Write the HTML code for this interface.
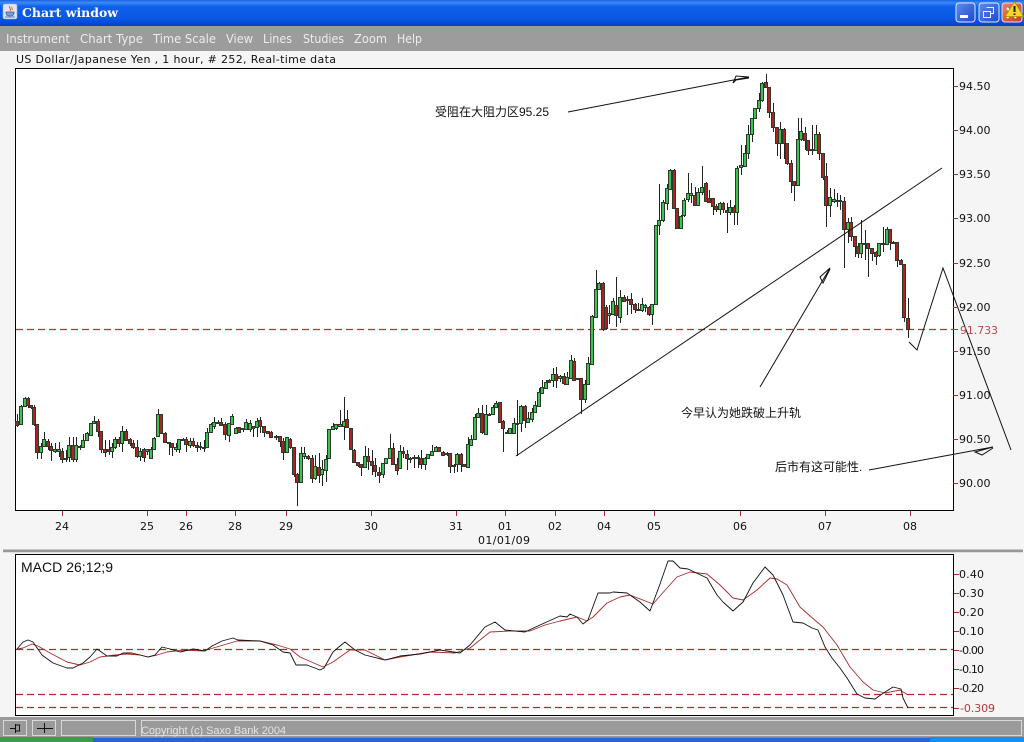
<!DOCTYPE html>
<html><head><meta charset="utf-8"><title>Chart window</title>
<style>html,body{margin:0;padding:0;background:#f5f5f5;overflow:hidden}svg{display:block}
text{font-family:"DejaVu Sans","Liberation Sans","Noto Sans CJK SC",sans-serif;font-size:11px}
.c{font-family:"Liberation Sans","Noto Sans CJK SC",sans-serif;font-size:12px;fill:#111}
.m{fill:#ececec;font-size:12px}.a{fill:#111}</style></head><body>
<svg width="1024" height="742" viewBox="0 0 1024 742" xmlns="http://www.w3.org/2000/svg">
<defs><linearGradient id="tb" x1="0" y1="0" x2="0" y2="1"><stop offset="0" stop-color="#1c60e0"/><stop offset=".1" stop-color="#3a8cf6"/><stop offset=".25" stop-color="#0f60ea"/><stop offset=".7" stop-color="#0a58e6"/><stop offset="1" stop-color="#0440c4"/></linearGradient>
<linearGradient id="bb" x1="0" y1="0" x2="1" y2="1"><stop offset="0" stop-color="#5f8cf0"/><stop offset="1" stop-color="#1c48c8"/></linearGradient>
<linearGradient id="br" x1="0" y1="0" x2="1" y2="1"><stop offset="0" stop-color="#e8866a"/><stop offset="1" stop-color="#c83a18"/></linearGradient></defs>
<rect width="1024" height="742" fill="#f5f5f5"/>
<rect width="1024" height="26" fill="url(#tb)"/>
<rect x="3" y="4" width="14" height="15" rx="2" fill="#dfe6f2" stroke="#9fb4dc" stroke-width=".6"/>
<path d="M10 6c-2 2 2 3 0 5M12 7c-1 1 1 2 0 3" stroke="#d8641c" fill="none"/>
<path d="M6 12h8c0 3-1 4-4 4s-4-1-4-4zM5 17h10" stroke="#3a5fa8" fill="#7f9cd0" stroke-width=".8"/>
<text x="22" y="17" font-weight="bold" textLength="96" lengthAdjust="spacingAndGlyphs" style="font-family:'DejaVu Serif','Liberation Serif',serif;font-size:12px" fill="#fff">Chart window</text>
<rect x="956" y="3" width="19" height="19" rx="3" fill="url(#bb)" stroke="#dfe8fb"/><rect x="960" y="15" width="8" height="3" fill="#fff"/>
<rect x="979" y="3" width="20" height="19" rx="3" fill="url(#bb)" stroke="#dfe8fb"/><path d="M986.500 7.500h7v6h-2.500M983.500 11.500h7v6h-7z" fill="none" stroke="#e8eefc"/>
<rect x="1002" y="3" width="20" height="19" rx="3" fill="url(#br)" stroke="#f0dcd4"/><path d="M1007 8l9 10M1016 8l-9 10" stroke="#fff" stroke-width="2"/>
<path d="M1014.500 1.500L1023.500 16.500H1005z" fill="#f8d428" stroke="#a88810" stroke-width=".8"/><path d="M1014.500 6v6M1014.500 13.500v1.500" stroke="#222" stroke-width="2"/>
<rect y="26" width="1024" height="25" fill="#9c9c9c"/>
<text class="m" x="6" y="43" textLength="64" lengthAdjust="spacingAndGlyphs">Instrument</text><text class="m" x="80" y="43" textLength="63" lengthAdjust="spacingAndGlyphs">Chart Type</text><text class="m" x="153" y="43" textLength="63" lengthAdjust="spacingAndGlyphs">Time Scale</text><text class="m" x="226" y="43" textLength="27" lengthAdjust="spacingAndGlyphs">View</text><text class="m" x="263" y="43" textLength="29" lengthAdjust="spacingAndGlyphs">Lines</text><text class="m" x="303" y="43" textLength="41" lengthAdjust="spacingAndGlyphs">Studies</text><text class="m" x="354" y="43" textLength="33" lengthAdjust="spacingAndGlyphs">Zoom</text><text class="m" x="397" y="43" textLength="25" lengthAdjust="spacingAndGlyphs">Help</text>
<text class="a" x="16" y="63" textLength="320">US Dollar/Japanese Yen , 1 hour, # 252, Real-time data</text>
<rect x="15.500" y="68.500" width="938" height="442" fill="#fff" stroke="#000"/>
<rect x="15.500" y="554.500" width="938" height="161" fill="#fff" stroke="#000"/>
<path d="M16 329.500H953" stroke="#b8302f" stroke-width="1.300" stroke-dasharray="7 4" fill="none"/>
<path d="M953 329.500H958" stroke="#b03838"/>
<g transform="translate(.5 0)"><path fill="none" stroke="#222" d="M17 414V427M21 405V424M25 397V406M28 397V408M31 405V409M34 405V426M37 424V459M41 443V459M44 432V447M48 439V450M51 443V461M55 443V453M59 442V457M62 448V463M66 450V462M69 437V462M73 437V462M76 437V462M80 445V450M83 434V447M87 432V440M91 423V435M94 416V423M98 419V437M101 431V453M105 440V457M109 440V455M112 443V458M115 437V449M119 437V447M122 426V452M126 429V440M130 438V446M133 440V449M137 440V458M140 448V461M144 448V462M147 449V455M151 447V458M154 437V450M158 409V437M161 414V433M165 432V443M169 442V455M172 443V456M176 443V452M179 439V453M183 438V441M186 437V452M190 438V448M193 438V447M197 442V452M200 442V450M204 440V452M207 428V447M211 423V433M214 417V429M218 420V424M221 418V426M225 422V440M229 423V442M232 414V424M236 427V434M239 427V433M243 428V432M246 419V429M250 420V432M253 426V437M257 418V437M260 417V433M264 426V437M268 431V433M271 431V438M276 435V440M280 436V447M283 438V460M287 437V452M290 438V449M294 447V477M297 473V506M301 447V482M304 447V459M308 455V460M312 455V483M315 455V480M319 453V483M322 460V486M326 455V482M329 429V459M333 423V430M336 424V430M340 410V426M344 397V440M347 410V428M351 428V450M354 449V462M358 462V467M361 464V476M365 446V468M368 448V470M372 450V475M375 458V477M379 467V483M383 463V478M386 458V464M390 434V458M393 443V464M397 458V475M400 445V469M403 447V458M407 450V470M410 457V463M414 455V468M418 455V468M421 450V469M425 457V470M428 454V458M432 445V455M436 446V451M439 447V452M443 451V456M447 452V456M450 453V473M454 464V473M457 453V472M461 453V472M464 464V467M468 437V467M471 435V445M475 414V440M478 408V418M482 405V434M486 405V434M489 413V416M493 405V415M496 401V408M500 402V423M503 420V452M507 430V434M510 428V434M514 418V433M517 400V456M521 405V432M525 405V428M528 412V423M532 408V422M535 401V412M539 388V407M542 380V394M546 380V389M549 379V383M553 368V387M556 367V388M560 375V382M564 373V385M567 372V385M571 355V378M574 358V381M578 378V380M581 378V414M585 380V403M588 357V385M592 315V364M596 270V318M599 282V290M603 282V331M606 305V330M609 305V324M613 298V315M616 277V327M620 290V323M624 295V302M627 296V315M631 293V314M635 303V313M638 303V310M642 298V312M645 304V312M649 306V316M652 304V325M656 225V305M659 184V235M663 200V222M667 184V210M670 169V190M674 169V209M677 208V229M681 215V229M684 198V217M688 173V202M691 183V203M695 187V206M698 188V206M702 166V195M706 182V202M709 190V203M713 198V215M716 204V212M720 202V215M723 202V213M727 203V233M730 200V215M734 205V225M737 166V225M741 145V175M745 145V167M748 125V159M752 118V142M755 108V119M759 93V112M762 82V102M766 74V88M769 87V118M773 103V132M777 127V156M780 122V159M784 128V159M787 143V165M791 160V193M794 181V201M798 118V186M801 118V141M805 127V150M808 140V155M812 125V155M816 125V151M819 132V160M823 153V180M826 163V227M830 188V217M834 189V203M837 193V207M840 195V210M844 197V268M848 218V243M851 217V241M855 236V257M858 243V258M861 220V258M865 230V260M868 243V277M872 248V261M876 251V265M879 243V257M883 227V252M887 227V244M890 229V250M893 241V244M897 242V267M901 259V265M904 264V322M908 298V338"/></g>
<g transform="translate(-1.500 .5)" stroke="#2a3a2c" stroke-width="1">
<path fill="#3cc24e" d="M21 406h3v18h-3zM25 398h3v8h-3zM41 446h3v6h-3zM44 439h3v7h-3zM55 449h3v2h-3zM59 449h3v2h-3zM66 458h3v1h-3zM69 445h3v12h-3zM76 445h3v14h-3zM80 446h3v1h-3zM83 440h3v7h-3zM87 433h3v7h-3zM91 423h3v12h-3zM94 421h3v2h-3zM112 447h3v4h-3zM115 439h3v8h-3zM122 431h3v12h-3zM140 451h3v5h-3zM147 449h3v2h-3zM151 449h3v9h-3zM154 438h3v11h-3zM158 414h3v22h-3zM176 447h3v2h-3zM179 439h3v10h-3zM183 439h3v1h-3zM190 441h3v4h-3zM207 432h3v15h-3zM211 424h3v8h-3zM214 422h3v4h-3zM218 422h3v1h-3zM229 423h3v12h-3zM232 416h3v8h-3zM236 428h3v5h-3zM246 422h3v7h-3zM250 423h3v6h-3zM257 421h3v6h-3zM287 437h3v15h-3zM301 453h3v29h-3zM304 453h3v3h-3zM315 466h3v12h-3zM322 469h3v5h-3zM326 459h3v11h-3zM329 429h3v29h-3zM333 426h3v3h-3zM336 424h3v4h-3zM340 424h3v2h-3zM344 421h3v5h-3zM365 456h3v11h-3zM383 463h3v11h-3zM386 458h3v5h-3zM390 448h3v10h-3zM400 451h3v17h-3zM414 457h3v1h-3zM418 457h3v1h-3zM425 458h3v6h-3zM428 454h3v4h-3zM432 451h3v4h-3zM436 447h3v4h-3zM457 454h3v10h-3zM468 444h3v23h-3zM471 439h3v6h-3zM475 417h3v22h-3zM478 413h3v4h-3zM486 414h3v20h-3zM489 414h3v1h-3zM493 407h3v7h-3zM496 403h3v4h-3zM510 428h3v5h-3zM514 423h3v10h-3zM517 423h3v1h-3zM521 406h3v17h-3zM528 418h3v4h-3zM532 412h3v7h-3zM535 405h3v7h-3zM539 392h3v14h-3zM542 387h3v6h-3zM546 382h3v6h-3zM553 374h3v6h-3zM560 376h3v2h-3zM567 377h3v7h-3zM571 360h3v18h-3zM585 384h3v15h-3zM588 363h3v21h-3zM592 316h3v48h-3zM596 289h3v28h-3zM599 283h3v6h-3zM609 313h3v2h-3zM613 301h3v13h-3zM620 297h3v20h-3zM627 299h3v1h-3zM642 304h3v6h-3zM645 305h3v2h-3zM652 304h3v10h-3zM656 225h3v79h-3zM659 220h3v5h-3zM663 202h3v18h-3zM667 188h3v15h-3zM670 170h3v19h-3zM681 216h3v12h-3zM684 200h3v15h-3zM688 193h3v6h-3zM691 193h3v2h-3zM698 192h3v13h-3zM702 187h3v5h-3zM720 203h3v6h-3zM730 207h3v5h-3zM737 168h3v44h-3zM741 165h3v2h-3zM745 153h3v13h-3zM748 134h3v19h-3zM752 118h3v16h-3zM755 108h3v10h-3zM759 100h3v8h-3zM762 83h3v17h-3zM780 129h3v14h-3zM798 139h3v46h-3zM801 131h3v8h-3zM816 134h3v16h-3zM830 197h3v8h-3zM834 199h3v2h-3zM848 222h3v7h-3zM861 243h3v10h-3zM865 243h3v1h-3zM879 243h3v12h-3zM883 243h3v1h-3zM887 229h3v15h-3z"/>
<path fill="#ae2222" d="M17 421h3v4h-3zM28 398h3v7h-3zM31 405h3v2h-3zM34 407h3v17h-3zM37 424h3v28h-3zM48 441h3v5h-3zM51 446h3v4h-3zM62 451h3v8h-3zM73 445h3v14h-3zM98 421h3v10h-3zM101 431h3v18h-3zM105 449h3v3h-3zM109 449h3v2h-3zM119 439h3v4h-3zM126 431h3v9h-3zM130 439h3v4h-3zM133 443h3v4h-3zM137 447h3v9h-3zM144 449h3v8h-3zM161 414h3v19h-3zM165 433h3v9h-3zM169 442h3v1h-3zM172 443h3v4h-3zM186 439h3v5h-3zM193 441h3v4h-3zM197 445h3v2h-3zM200 446h3v1h-3zM204 447h3v1h-3zM221 422h3v3h-3zM225 424h3v10h-3zM239 427h3v5h-3zM243 428h3v1h-3zM253 426h3v2h-3zM260 420h3v6h-3zM264 426h3v6h-3zM268 431h3v2h-3zM271 432h3v5h-3zM276 436h3v1h-3zM280 436h3v5h-3zM283 441h3v11h-3zM290 439h3v8h-3zM294 447h3v27h-3zM297 474h3v8h-3zM308 456h3v2h-3zM312 458h3v20h-3zM319 467h3v8h-3zM347 419h3v8h-3zM351 428h3v21h-3zM354 450h3v12h-3zM358 462h3v3h-3zM361 464h3v3h-3zM368 456h3v5h-3zM372 461h3v4h-3zM375 465h3v6h-3zM379 472h3v3h-3zM393 448h3v16h-3zM397 464h3v6h-3zM403 451h3v2h-3zM407 454h3v4h-3zM410 458h3v1h-3zM421 458h3v6h-3zM439 447h3v4h-3zM443 452h3v3h-3zM447 453h3v1h-3zM450 453h3v13h-3zM454 465h3v1h-3zM461 454h3v10h-3zM464 464h3v2h-3zM482 413h3v19h-3zM500 402h3v20h-3zM503 421h3v7h-3zM507 432h3v1h-3zM525 406h3v14h-3zM549 380h3v2h-3zM556 374h3v6h-3zM564 376h3v7h-3zM574 361h3v19h-3zM578 378h3v1h-3zM581 378h3v21h-3zM603 283h3v46h-3zM606 307h3v21h-3zM616 305h3v10h-3zM624 297h3v4h-3zM631 299h3v5h-3zM635 304h3v5h-3zM638 309h3v1h-3zM649 307h3v7h-3zM674 170h3v38h-3zM677 208h3v20h-3zM695 195h3v10h-3zM706 183h3v18h-3zM709 198h3v4h-3zM713 198h3v8h-3zM716 206h3v3h-3zM723 203h3v6h-3zM727 210h3v2h-3zM734 207h3v5h-3zM766 82h3v5h-3zM769 87h3v25h-3zM773 112h3v15h-3zM777 127h3v16h-3zM784 129h3v14h-3zM787 143h3v20h-3zM791 163h3v18h-3zM794 181h3v4h-3zM805 133h3v7h-3zM808 140h3v10h-3zM812 149h3v1h-3zM819 134h3v19h-3zM823 153h3v24h-3zM826 176h3v29h-3zM837 200h3v1h-3zM840 200h3v1h-3zM844 201h3v28h-3zM851 222h3v14h-3zM855 236h3v10h-3zM858 246h3v7h-3zM868 243h3v5h-3zM872 248h3v5h-3zM876 252h3v4h-3zM890 229h3v13h-3zM893 242h3v1h-3zM897 242h3v18h-3zM901 260h3v4h-3zM904 264h3v53h-3zM908 318h3v11h-3z"/>
</g>
<g fill="none" stroke="#111" stroke-width="1">
<path d="M516 456L942 168"/>
<path d="M909 342L917 350L943 268L1011 450"/>
<path d="M568 112L749 77L736 76L733 83L736 80L749 78"/>
<path d="M760 387L830 268L820 277L823 283L830 269"/>
<path d="M869 470L993 447L975 452L982 455L993 448"/>
</g>
<text class="c" x="435" y="116">受阻在大阻力区95.25</text>
<text class="c" x="681" y="417">今早认为她跌破上升轨</text>
<text class="c" x="775" y="471">后市有这可能性.</text>
<g fill="none" stroke="#a03030">
<path d="M953 86.500h5M953 130.500h5M953 174.500h5M953 218.500h5M953 263.500h5M953 307.500h5M953 351.500h5M953 395.500h5M953 439.500h5M953 483.500h5"/>
<path d="M62.500 511v5M147.500 511v5M186.500 511v5M235.500 511v5M286.500 511v5M371.500 511v5M456.500 511v5M505.500 511v5M555.500 511v5M604.500 511v5M654.500 511v5M740.500 511v5M825.500 511v5M910.500 511v5"/>
<path d="M954 574.500h5M954 593.500h5M954 612.500h5M954 631.500h5M954 650.500h5M954 669.500h5M954 688.500h5M954 708.500h5"/>
</g>
<g class="a">
<text x="959" y="90">94.50</text><text x="959" y="134">94.00</text><text x="959" y="178">93.50</text><text x="959" y="222">93.00</text><text x="959" y="267">92.50</text><text x="959" y="311">92.00</text><text x="959" y="355">91.50</text><text x="959" y="399">91.00</text><text x="959" y="443">90.50</text><text x="959" y="487">90.00</text>
<g text-anchor="middle"><text x="62" y="530">24</text><text x="147" y="530">25</text><text x="186" y="530">26</text><text x="235" y="530">28</text><text x="286" y="530">29</text><text x="371" y="530">30</text><text x="456" y="530">31</text><text x="505" y="530">01</text><text x="555" y="530">02</text><text x="604" y="530">04</text><text x="654" y="530">05</text><text x="740" y="530">06</text><text x="825" y="530">07</text><text x="910" y="530">08</text></g>
<text x="478" y="544" textLength="52">01/01/09</text>
<text x="959" y="578" textLength="25">0.40</text><text x="959" y="597" textLength="25">0.30</text><text x="959" y="616" textLength="25">0.20</text><text x="959" y="635" textLength="25">0.10</text><text x="959" y="654" textLength="25">-0.00</text><text x="959" y="673" textLength="25">-0.10</text><text x="959" y="692" textLength="25">-0.20</text>
</g>
<text x="960" y="334" fill="#c04848" textLength="38">91.733</text>
<text x="960" y="712" fill="#b83838" textLength="35">-0.309</text>
<rect x="3" y="549" width="1020" height="1" fill="#c8c8c8"/><rect x="3" y="550" width="1020" height="2" fill="#989898"/><rect x="3" y="552" width="1020" height="1" fill="#dedede"/>
<path d="M16 649.500H953M16 694.500H953M16 707.500H953" stroke="#b02c2c" stroke-width="1.300" stroke-dasharray="7 4" fill="none"/>
<text x="21" y="572" style="font-family:'Liberation Sans',sans-serif;font-size:14px" fill="#111" textLength="92">MACD 26;12;9</text>
<path fill="none" stroke="#a82c2c" stroke-width=".9" stroke-linejoin="round" d="M17 649L23 648L32 644L38 646L50 653L67 662L80 665L90 662L100 657L115 655L127 654L140 655L148 657L157 655L167 652L183 650L203 651L220 646L237 641L260 641L277 645L290 649L300 657L323 667L333 662L340 657L350 650L365 650L385 660L400 657L430 652L455 653L470 648L490 632L510 631L530 631L545 625L560 621L577 617L587 621L593 617L607 603L620 597L630 595L653 604L667 588L677 577L690 572L707 574L720 585L733 598L743 600L757 590L770 578L777 579L787 585L800 607L810 616L823 627L837 645L850 667L863 682L873 690L885 693L900 690L908 695"/>
<path fill="none" stroke="#111" stroke-width=".9" stroke-linejoin="round" d="M17 649L23 642L28 640L33 642L42 655L53 663L67 668L73 668L83 663L90 657L97 649L107 656L117 656L123 653L132 653L148 657L155 655L162 647L170 649L180 652L193 649L205 651L212 646L222 641L233 638L238 640L260 641L273 645L283 652L290 653L296 665L307 665L320 670L324 668L333 652L340 646L345 642L355 650L365 655L385 660L400 656L420 654L440 650L460 653L470 645L485 627L495 622L505 630L525 632L540 625L560 616L567 617L570 614L577 617L583 624L588 620L598 593L610 593L613 592L627 593L640 602L650 611L660 584L668 561L673 561L680 568L688 569L707 578L717 595L723 602L733 611L743 602L753 583L765 567L773 575L783 595L793 622L803 623L812 628L818 630L825 647L832 658L840 668L847 678L857 694L865 698L875 699L882 694L893 687L901 689L903 698L908 708"/>
<rect y="717" width="1024" height="20" fill="#9a9a9a"/>
<g fill="none" stroke="#d8d8d8"><rect x="3.500" y="720.500" width="23" height="15"/><rect x="32.500" y="720.500" width="23" height="15"/><rect x="61.500" y="720.500" width="74" height="15"/><rect x="141.500" y="720.500" width="880" height="15"/></g>
<path d="M10 728.500h5M15.500 724v9M15.500 725h4v6h-4M37 728.500h16M44.500 723v10" stroke="#111" fill="none"/>
<text x="141" y="734" style="font-family:'Liberation Sans',sans-serif;font-size:11px" fill="#e4e4e4" textLength="145">Copyright (c) Saxo Bank 2004</text>
<rect y="737" width="1024" height="5" fill="#2a62d8"/><rect y="737" width="1024" height="1" fill="#5a8cee"/><rect y="737" width="93" height="5" fill="#3f9a48"/><rect x="930" y="737" width="94" height="5" fill="#1a8ee6"/>
</svg>
</body></html>
